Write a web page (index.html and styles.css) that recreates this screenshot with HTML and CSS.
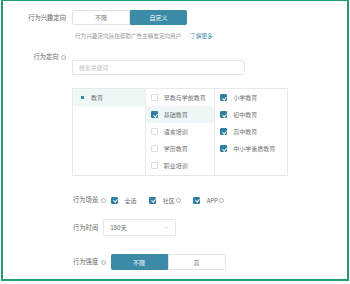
FILE: index.html
```html
<!DOCTYPE html>
<html lang="zh">
<head>
    <meta charset="UTF-8">
    <meta name="viewport" content="width=device-width, initial-scale=1.0">
    <title>行为兴趣定向</title>
    <link rel="stylesheet" href="styles.css">
</head>
<body>
    <div class="frame">
        <div class="row seg-row">
            <span class="label">行为兴趣定向</span>
            <div class="seg">
                <span class="seg-btn">不限</span>
                <span class="seg-btn active">自定义</span>
            </div>
        </div>
        <p class="hint">行为兴趣定向旨在帮助广告主精准定向用户<a class="more">了解更多</a></p>

        <div class="row top-row">
            <span class="label">行为定向 <i class="info"></i></span>
            <div class="target">
                <div class="search">搜索关键词</div>
                <div class="cascader">
                    <ul class="col">
                        <li class="on"><span class="dot"></span>教育</li>
                    </ul>
                    <ul class="col">
                        <li><span class="cb"></span>早教与学前教育</li>
                        <li class="on"><span class="cb checked"></span>基础教育</li>
                        <li><span class="cb"></span>语言培训</li>
                        <li><span class="cb"></span>学历教育</li>
                        <li><span class="cb"></span>职业培训</li>
                    </ul>
                    <ul class="col">
                        <li><span class="cb checked"></span>小学教育</li>
                        <li><span class="cb checked"></span>初中教育</li>
                        <li><span class="cb checked"></span>高中教育</li>
                        <li><span class="cb checked"></span>中小学素质教育</li>
                    </ul>
                </div>
            </div>
        </div>

        <div class="sub">
            <div class="row scene-row">
                <span class="sub-label">行为场景 <i class="info"></i></span>
                <label class="opt"><span class="cb checked"></span>全选</label>
                <label class="opt"><span class="cb checked"></span>社区<i class="info"></i></label>
                <label class="opt"><span class="cb checked"></span>APP<i class="info"></i></label>
            </div>
            <div class="row time-row">
                <span class="sub-label">行为时间</span>
                <div class="select">
                    <span>180天</span>
                    <svg class="chev" width="5" height="3" viewBox="0 0 5 3"><path d="M0.5 0.5 L2.5 2.5 L4.5 0.5" fill="none" stroke="#c4c4c4" stroke-width="0.7"/></svg>
                </div>
            </div>
            <div class="row power-row">
                <span class="sub-label">行为强度 <i class="info"></i></span>
                <div class="seg seg-small">
                    <span class="seg-btn active">不限</span>
                    <span class="seg-btn">高</span>
                </div>
            </div>
        </div>
    </div>
</body>
</html>
```

FILE: styles.css
```css
    body {
        margin: 0;
        padding: 0;
        background-color: #ffffff;
        font-family: "Noto Sans CJK SC", "Noto Sans", sans-serif;
        color: #666666;
    }

    .frame {
        box-sizing: border-box;
        width: 348px;
        height: 281px;
        margin-left: 1px;
        border: 2px solid #1f9e74;
        border-top-width: 1px;
        padding-top: 9px;
    }

    .row {
        display: flex;
        align-items: center;
    }

    .label {
        width: 63px;
        margin-right: 6px;
        text-align: right;
        font-size: 6.3px;
        line-height: 8px;
        color: #666666;
        white-space: nowrap;
    }

    .info {
        display: inline-block;
        box-sizing: border-box;
        width: 5px;
        height: 5px;
        margin-left: 1px;
        border: 0.7px solid #b0b0b0;
        border-radius: 50%;
        vertical-align: -0.5px;
    }

    /* segmented buttons */
    .seg {
        display: flex;
        height: 15px;
    }

    .seg-btn {
        box-sizing: border-box;
        width: 58px;
        display: flex;
        align-items: center;
        justify-content: center;
        font-size: 6px;
        color: #777777;
        border: 0.6px solid #e2e2e2;
        background-color: #ffffff;
    }

    .seg-btn:first-child {
        border-radius: 1.5px 0 0 1.5px;
    }

    .seg-btn:last-child {
        width: 57px;
        border-radius: 0 1.5px 1.5px 0;
    }

    .seg-btn.active {
        background-color: #3b8ba7;
        border-color: #3b8ba7;
        color: #ffffff;
    }

    .hint {
        margin: 7px 0 0 72px;
        font-size: 5.6px;
        line-height: 8px;
        color: #9a9a9a;
        white-space: nowrap;
    }

    .hint .more {
        margin-left: 9px;
        color: #3b8ba7;
    }

    .top-row {
        align-items: flex-start;
        margin-top: 13px;
    }

    .target {
        display: flex;
        flex-direction: column;
    }

    .search {
        box-sizing: border-box;
        width: 173px;
        height: 15px;
        margin-top: 7px;
        padding-left: 6px;
        display: flex;
        align-items: center;
        border: 0.6px solid #e4e4e4;
        border-radius: 1.5px;
        font-size: 5.8px;
        color: #bbbbbb;
    }

    /* cascader panel */
    .cascader {
        display: flex;
        box-sizing: border-box;
        width: 216px;
        height: 88px;
        margin-top: 13px;
        border: 0.6px solid #e8e8e8;
    }

    .col {
        list-style: none;
        margin: 0;
        padding: 0;
        width: 73px;
        border-right: 0.6px solid #ececec;
    }

    .col:nth-child(2) {
        width: 70px;
    }

    .col:last-child {
        border-right: none;
    }

    .col li {
        display: flex;
        align-items: center;
        height: 17px;
        padding-left: 5px;
        font-size: 6px;
        color: #707070;
        white-space: nowrap;
    }

    .col li.on {
        background-color: #eef6f8;
    }

    .dot {
        width: 3px;
        height: 3px;
        margin: 0 7px 0 3px;
        background-color: #3b8ba7;
    }

    .cb {
        box-sizing: border-box;
        position: relative;
        flex-shrink: 0;
        width: 7px;
        height: 7px;
        margin-right: 6px;
        border: 0.6px solid #dddddd;
        border-radius: 1px;
        background-color: #ffffff;
    }

    .cb.checked {
        background-color: #2f7fa1;
        border-color: #2f7fa1;
    }

    .cb.checked::after {
        content: "";
        position: absolute;
        left: 2px;
        top: 0.6px;
        width: 1.6px;
        height: 3.2px;
        border: solid #ffffff;
        border-width: 0 0.9px 0.9px 0;
        transform: rotate(40deg);
    }

    /* nested behaviour options */
    .sub {
        padding-left: 70px;
    }

    .sub-label {
        margin-right: 5px;
        font-size: 6.3px;
        line-height: 8px;
        color: #666666;
        white-space: nowrap;
    }

    .scene-row {
        height: 10px;
        margin-top: 19px;
    }

    .opt {
        display: flex;
        align-items: center;
        margin-right: 12px;
        font-size: 6px;
        color: #707070;
    }

    .opt .cb {
        margin-right: 7px;
    }

    .time-row {
        margin-top: 14px;
    }

    .select {
        box-sizing: border-box;
        width: 73px;
        height: 17px;
        display: flex;
        align-items: center;
        justify-content: space-between;
        padding: 0 6px;
        border: 0.6px solid #e4e4e4;
        border-radius: 1.5px;
        font-size: 6.2px;
        color: #666666;
    }

    .power-row {
        margin-top: 18px;
    }

    .seg-small {
        height: 16px;
    }

    .seg-small .seg-btn {
        width: 57px;
    }

    .seg-small .seg-btn:last-child {
        width: 58px;
    }
```
